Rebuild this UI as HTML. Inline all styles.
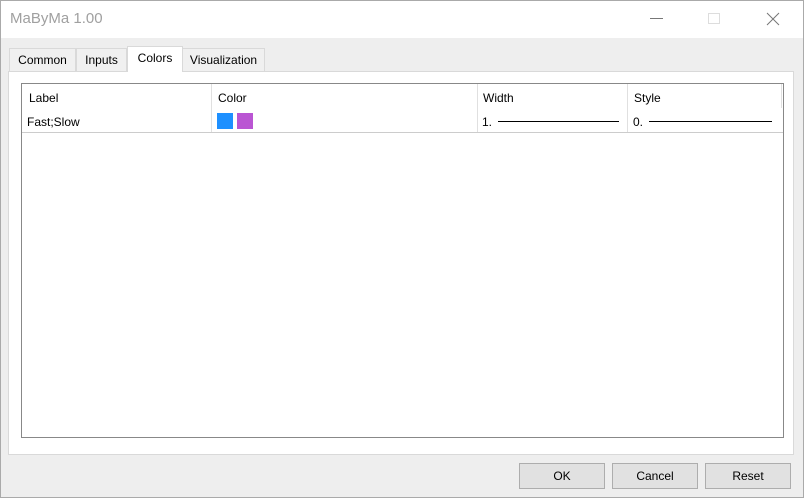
<!DOCTYPE html>
<html><head><style>
*{margin:0;padding:0;box-sizing:border-box}
body{width:804px;height:499px;background:#fff;font-family:"Liberation Sans",Arial,sans-serif;font-size:12px;color:#000;position:relative;overflow:hidden}
.win{position:absolute;left:0;top:0;width:804px;height:498px;background:#eeeeee}
.frame{position:absolute;left:0;top:0;width:804px;height:498px;border:1px solid #aaa;z-index:9}
.title{position:absolute;left:0;top:0;width:804px;height:38px;background:#fff}
.title span{position:absolute;left:10px;top:10px;font-size:15px;color:#a0a0a0}
.a{position:absolute}
.tab{position:absolute;top:48px;height:23px;border:1px solid #d9d9d9;border-bottom:none;background:#f0f0f0;text-align:center;line-height:22px;font-size:12px}
.panel{position:absolute;left:8px;top:71px;width:786px;height:384px;background:#fff;border:1px solid #d9d9d9}
.grid{position:absolute;left:21px;top:83px;width:763px;height:355px;border:1px solid #888;background:#fff}
.vl{position:absolute;top:0;width:1px;height:49px;background:#e0e0e0}
.btn{position:absolute;top:463px;width:86px;height:26px;background:#e1e1e1;border:1px solid #adadad;text-align:center;line-height:24px;font-size:12px}
</style></head><body>
<div class="win">
<div class="title"><span>MaByMa 1.00</span>
<div class="a" style="left:650px;top:18px;width:13px;height:1px;background:#777"></div>
<div class="a" style="left:708px;top:13px;width:12px;height:11px;border:1px solid #ddd"></div>
<svg class="a" style="left:766px;top:12px" width="14" height="14"><path d="M1 1L13 13M13 1L1 13" stroke="#777" stroke-width="1"/></svg>
</div>
<div class="tab" style="left:9px;width:67px">Common</div>
<div class="tab" style="left:76px;width:51px">Inputs</div>
<div class="tab" style="left:182px;width:83px">Visualization</div>
<div class="panel"></div>
<div class="tab" style="left:127px;top:46px;height:26px;width:56px;background:#fff;line-height:22px;z-index:2">Colors</div>
<div class="grid">
<div class="vl" style="left:189px"></div>
<div class="vl" style="left:455px"></div>
<div class="vl" style="left:605px"></div>
<div class="vl" style="left:759px;height:24px"></div>
<div class="a" style="left:0;top:48px;width:761px;height:1px;background:#ccc"></div>
<div class="a" style="left:7px;top:7px">Label</div>
<div class="a" style="left:196px;top:7px">Color</div>
<div class="a" style="left:461px;top:7px">Width</div>
<div class="a" style="left:612px;top:7px">Style</div>
<div class="a" style="left:5px;top:31px">Fast;Slow</div>
<div class="a" style="left:195px;top:29px;width:16px;height:16px;background:#1e90ff"></div>
<div class="a" style="left:215px;top:29px;width:16px;height:16px;background:#ba55d3"></div>
<div class="a" style="left:460px;top:31px">1.</div>
<div class="a" style="left:476px;top:37px;width:121px;height:1px;background:#000"></div>
<div class="a" style="left:611px;top:31px">0.</div>
<div class="a" style="left:627px;top:37px;width:123px;height:1px;background:#000"></div>
</div>
<div class="btn" style="left:519px">OK</div>
<div class="btn" style="left:612px">Cancel</div>
<div class="btn" style="left:705px">Reset</div>
</div>
<div class="frame"></div>
</body></html>
